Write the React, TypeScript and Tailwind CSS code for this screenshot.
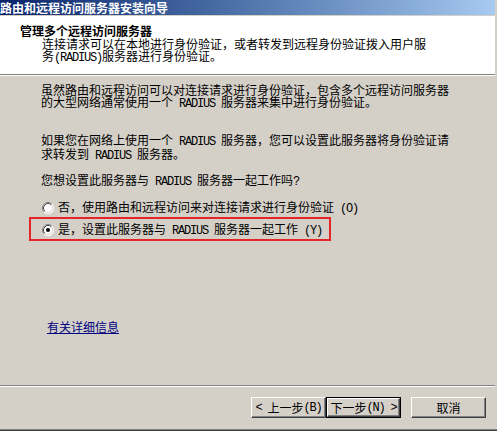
import type { ReactNode } from 'react'

function L({ children }: { children: ReactNode }) {
  return <span className="whitespace-pre font-['Liberation_Mono',monospace] text-[12px] tracking-[-1.2px]">{children}</span>
}

function Radio({ checked }: { checked?: boolean }) {
  return (
    <svg width="12" height="12" viewBox="0 0 12 12" className="shrink-0">
      <circle cx="6" cy="6" r="5.5" fill="#ffffff" />
      <path d="M2.11 9.89A5.5 5.5 0 0 1 9.89 2.11" fill="none" stroke="#808080" strokeWidth="1" />
      <path d="M9.89 2.11A5.5 5.5 0 0 1 2.11 9.89" fill="none" stroke="#ffffff" strokeWidth="1" />
      <path d="M2.82 9.18A4.5 4.5 0 0 1 9.18 2.82" fill="none" stroke="#404040" strokeWidth="1" />
      <path d="M9.18 2.82A4.5 4.5 0 0 1 2.82 9.18" fill="none" stroke="#d4d0c8" strokeWidth="1" />
      {checked && <circle cx="6" cy="6" r="2" fill="#000000" />}
    </svg>
  )
}

function WinButton({ children, isDefault }: { children: ReactNode; isDefault?: boolean }) {
  const face = (
    <div className="flex h-full w-full items-center justify-center whitespace-nowrap border border-b-[#404040] border-l-white border-r-[#404040] border-t-white bg-[#d4d0c8] shadow-[inset_-1px_-1px_#808080]">
      {children}
    </div>
  )
  return isDefault ? (
    <div className="h-[21px] w-[75px] border border-black">{face}</div>
  ) : (
    <div className="h-[21px] w-[75px]">{face}</div>
  )
}

export default function App() {
  return (
    <div className="flex h-[431px] w-[497px] flex-col overflow-hidden bg-[#d4d0c8] font-['Noto_Sans_CJK_SC',sans-serif] text-[12px] leading-[12px] text-black">
      <div className="flex w-[495px] flex-1 flex-col">
        <div className="h-[15px] whitespace-nowrap bg-gradient-to-r from-[#0a246a] to-[#a6caf0] font-bold leading-[15px] text-white">
          路由和远程访问服务器安装向导
        </div>
        <div className="h-px bg-[#d4d0c8]" />
        <div className="h-[58px] whitespace-nowrap bg-white pl-[20px] pt-[9px]">
          <div className="font-bold">管理多个远程访问服务器</div>
          <div className="mt-px pl-[22px]">
            <div>连接请求可以在本地进行身份验证，或者转发到远程身份验证拨入用户服</div>
            <div>务<L>(RADIUS)</L>服务器进行身份验证。</div>
          </div>
        </div>
        <div className="h-px bg-[#808080]" />
        <div className="h-px bg-white" />

        <div className="flex flex-1 flex-col items-start whitespace-nowrap pl-[41px] pt-[8px]">
          <div>
            <div>虽然路由和远程访问可以对连接请求进行身份验证，包含多个远程访问服务器</div>
            <div>的大型网络通常使用一个<L> RADIUS </L>服务器来集中进行身份验证。</div>
          </div>
          <div className="mt-[24px]">
            <div>如果您在网络上使用一个<L> RADIUS </L>服务器，您可以设置此服务器将身份验证请</div>
            <div>求转发到<L> RADIUS </L>服务器。</div>
          </div>
          <div className="mt-[12px]">您想设置此服务器与<L> RADIUS </L>服务器一起工作吗<L>?</L></div>
          <label className="ml-px mt-[13px] flex items-center gap-[4px]">
            <Radio />
            <span>否，使用路由和远程访问来对连接请求进行身份验证<L> (O)</L></span>
          </label>
          <div className="-ml-[12px] mt-[2px] h-[24px] w-[302px] border-2 border-[#e5252a] pl-[11px] pt-[4px]">
            <label className="flex items-center gap-[4px]">
              <Radio checked />
              <span>是，设置此服务器与<L> RADIUS </L>服务器一起工作<L> (Y)</L></span>
            </label>
          </div>
          <a className="ml-[6px] mt-[80px] text-[#000080] underline">有关详细信息</a>
        </div>

        <div className="h-px bg-[#808080]" />
        <div className="h-px bg-white" />
        <div className="flex h-[42px] items-start justify-end pr-[9px] pt-[10px]">
          <WinButton>
            <L>{'< '}</L>上一步<L>(B)</L>
          </WinButton>
          <WinButton isDefault>
            下一步<L>{'(N) >'}</L>
          </WinButton>
          <div className="w-[10px]" />
          <WinButton>取消</WinButton>
        </div>
      </div>
      <div className="h-px w-full bg-[#808080]" />
      <div className="h-px w-full bg-[#404040]" />
    </div>
  )
}
